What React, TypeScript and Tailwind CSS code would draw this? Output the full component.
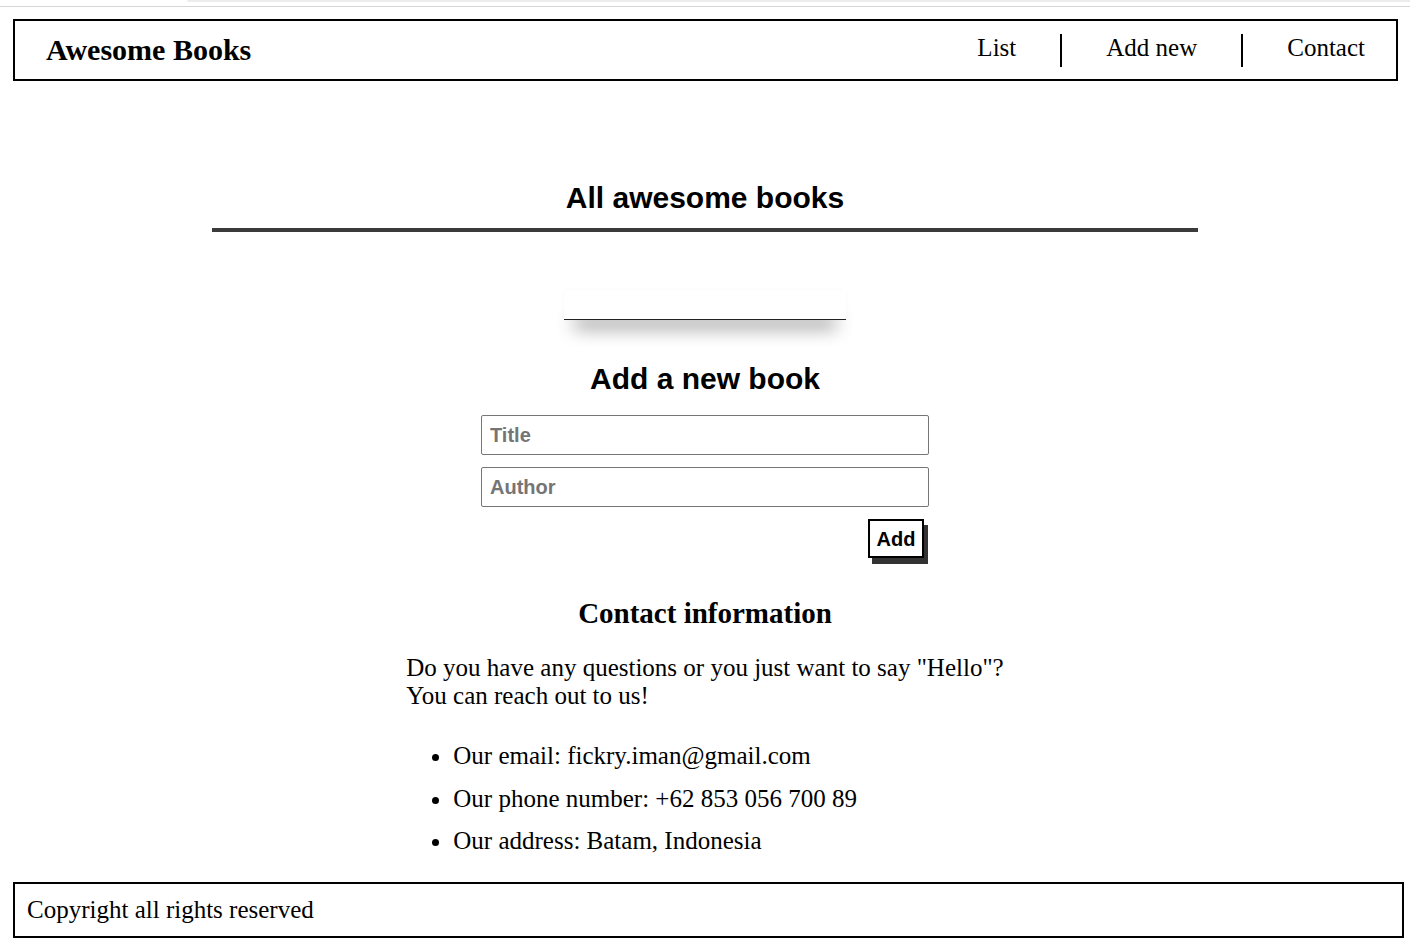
import React from "react";

const serif = { fontFamily: '"Liberation Serif", "Times New Roman", serif' };
const sans = { fontFamily: '"Liberation Sans", Arial, sans-serif' };

export default function App() {
  return (
    <div className="w-[1410px] min-h-[938px] bg-white text-black overflow-hidden" style={serif}>
      {/* top strip */}
      <div className="flex h-[6px]">
        <div className="w-[187px]" />
        <div className="flex-1 h-[2px] bg-[#ececec] rounded-bl-[3px]" />
      </div>
      <div className="h-[1px] bg-[#d6d6d6]" />

      {/* header */}
      <header className="mt-[12px] ml-[13px] w-[1385px] h-[62px] border-2 border-black flex items-center justify-between">
        <h1 className="pl-[31px] text-[30px] font-bold leading-[34px]" style={serif}>
          Awesome Books
        </h1>
        <ul className="flex items-center">
          <li className="h-[33px] px-[44px] text-[25px] leading-[27px]">List</li>
          <li className="h-[33px] px-[44px] border-l-2 border-black text-[25px] leading-[27px]">Add new</li>
          <li className="h-[33px] pl-[44px] pr-[31px] border-l-2 border-black text-[25px] leading-[27px]">Contact</li>
        </ul>
      </header>

      {/* list section */}
      <main className="flex flex-col items-center">
        <h2 className="mt-[100px] text-[30px] font-bold leading-[34px]" style={sans}>
          All awesome books
        </h2>
        <div className="mt-[13px] w-[986px] h-[4px] bg-[#3b3b3b]" />

        <div className="mt-[58px] w-[282px] h-[30px] border-b border-[#222] shadow-[0_0_3px_rgba(0,0,0,0.03),0_18px_18px_-10px_rgba(0,0,0,0.45)]" />

        {/* add new */}
        <h2 className="mt-[42px] text-[30px] font-bold leading-[34px]" style={sans}>
          Add a new book
        </h2>
        <form className="mt-[19px] w-[448px] flex flex-col" onSubmit={(e) => e.preventDefault()}>
          <input
            type="text"
            placeholder="Title"
            className="h-[40px] w-full border border-[#767676] rounded-[2px] px-[8px] text-[20px] font-bold placeholder:text-[#757575] outline-none"
            style={sans}
          />
          <input
            type="text"
            placeholder="Author"
            className="mt-[12px] h-[40px] w-full border border-[#767676] rounded-[2px] px-[8px] text-[20px] font-bold placeholder:text-[#757575] outline-none"
            style={sans}
          />
          <div className="mt-[12px] flex justify-end pr-[5px]">
            <button
              type="submit"
              className="h-[39px] w-[56px] border-2 border-black bg-white text-[20px] font-bold shadow-[4px_6px_0_#333] flex items-center justify-center"
              style={sans}
            >
              Add
            </button>
          </div>
        </form>

        {/* contact */}
        <h3 className="mt-[38px] text-[29px] font-bold leading-[34px]" style={serif}>
          Contact information
        </h3>
        <div className="w-fit">
          <p className="mt-[24px] text-[25px] leading-[28px]">
            Do you have any questions or you just want to say "Hello"?
            <br />
            You can reach out to us!
          </p>
          <ul className="mt-[25px] list-disc pl-[47px] text-[25px] leading-[42.5px]">
            <li>Our email: fickry.iman@gmail.com</li>
            <li>Our phone number: +62 853 056 700 89</li>
            <li>Our address: Batam, Indonesia</li>
          </ul>
        </div>
      </main>

      {/* footer */}
      <footer className="mt-[19px] ml-[13px] w-[1391px] h-[56px] border-2 border-black flex items-center pl-[12px] text-[25px]">
        Copyright all rights reserved
      </footer>
    </div>
  );
}
